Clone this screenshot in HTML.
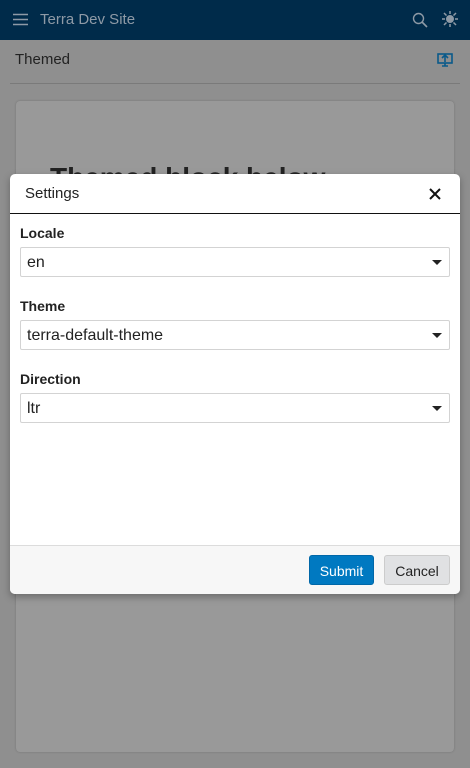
<!DOCTYPE html>
<html><head><style>
*{box-sizing:border-box}
body{margin:0;width:470px;height:768px;background:#8f8f8f;font-family:"Liberation Sans",sans-serif;position:relative;overflow:hidden}
.top{position:absolute;left:0;top:0;width:470px;height:40px;background:#002b4a}
.top .t{position:absolute;left:40px;top:11px;color:#8e9aa6;font-size:15px}
.sub{position:absolute;left:15px;top:51px;font-size:15px;color:#222}
.line{position:absolute;left:10px;top:83px;width:450px;height:1px;background:#7a7a7a}
.card{position:absolute;left:16px;top:101px;width:438px;height:651px;background:#999;border-radius:4px;box-shadow:0 0 2px rgba(0,0,0,.2)}
.card h1{position:absolute;left:34px;top:61px;margin:0;font-size:28px;color:#222}
.modal{position:absolute;left:10px;top:174px;width:450px;height:420px;background:#fff;border-radius:5px;overflow:hidden;box-shadow:0 3px 8px rgba(0,0,0,.3)}
.mh{height:40px;border-bottom:1.5px solid #111;position:relative}
.mh span{position:absolute;left:15px;top:11px;font-size:15px;color:#222}
.lab{position:absolute;left:10px;font-size:14px;font-weight:bold;color:#222}
.sel{position:absolute;left:10px;width:430px;height:30px;border:1px solid #d3d3d3;border-radius:2px;font-size:16px;color:#222;padding:6px 6px}
.sel:after{content:"";position:absolute;right:7px;top:12px;border-left:5px solid transparent;border-right:5px solid transparent;border-top:5px solid #222}
.mf{position:absolute;left:0;top:371px;width:450px;height:49px;background:#f7f7f7;border-top:1px solid #dcdcdc}
.b{position:absolute;top:9px;height:30px;border-radius:3px;font-size:14px;padding-top:7px;text-align:center}
</style></head><body>
<div class="top">
<svg style="position:absolute;left:13px;top:13px" width="15" height="13"><path d="M0 1.5H15M0 6.5H15M0 11.5H15" stroke="#8e9aa6" stroke-width="1.6"/></svg>
<div class="t">Terra Dev Site</div>
<svg style="position:absolute;left:412px;top:12px" width="16" height="16"><circle cx="6.5" cy="6.5" r="5" fill="none" stroke="#8e9aa6" stroke-width="1.4"/><path d="M10 10L15 15" stroke="#8e9aa6" stroke-width="1.6"/></svg>
<svg style="position:absolute;left:442px;top:11px" width="16" height="16"><circle cx="8" cy="8" r="4" fill="#8e9aa6"/><path d="M8 0V3M8 13V16M0 8H3M13 8H16M2 2L4.5 4.5M11.5 11.5L14 14M14 2L11.5 4.5M4.5 11.5L2 14" stroke="#8e9aa6" stroke-width="1.5"/></svg>
</div>
<div class="sub">Themed</div>
<svg style="position:absolute;left:437px;top:53px" width="16" height="14"><rect x="1" y="1" width="14" height="9" fill="none" stroke="#0a5a8a" stroke-width="1.6"/><path d="M8 9V2M5 5L8 2L11 5M5 13H11M8 10V13" stroke="#0a5a8a" stroke-width="1.6" fill="none"/></svg>
<div class="line"></div>
<div class="card"><h1>Themed block below</h1></div>
<div class="modal">
<div class="mh"><span>Settings</span>
<svg style="position:absolute;left:419px;top:14px" width="12" height="12"><path d="M1 1L11 11M11 1L1 11" stroke="#111" stroke-width="2"/></svg></div>
<div class="lab" style="top:51px">Locale</div>
<div class="sel" style="top:73px">en</div>
<div class="lab" style="top:124px">Theme</div>
<div class="sel" style="top:146px">terra-default-theme</div>
<div class="lab" style="top:197px">Direction</div>
<div class="sel" style="top:219px">ltr</div>
<div class="mf">
<div class="b" style="left:299px;width:65px;background:#0079c1;color:#fff;border:1px solid #0067a8">Submit</div>
<div class="b" style="left:374px;width:66px;background:#e0e1e3;color:#222;border:1px solid #ccc">Cancel</div>
</div>
</div>
</body></html>
